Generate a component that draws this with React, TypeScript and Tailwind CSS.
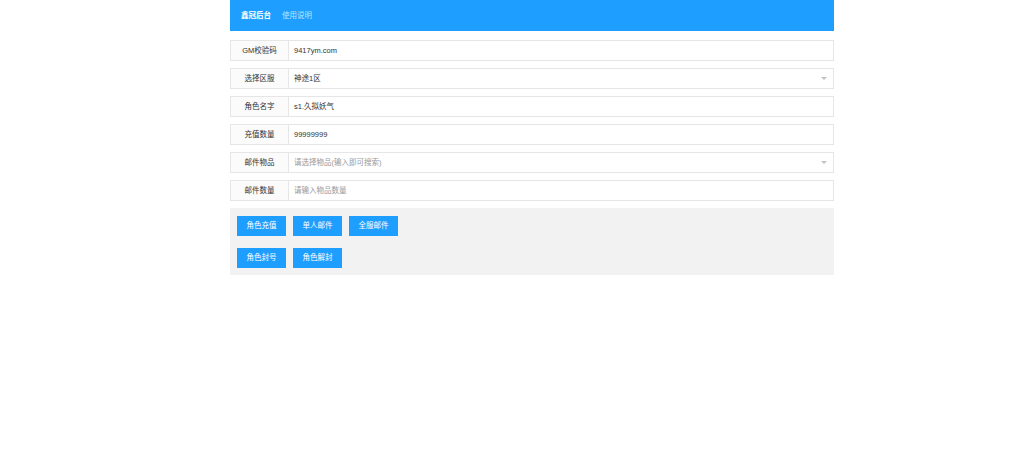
import React from "react";

const font = "font-['Liberation_Sans','Noto_Sans_CJK_SC',sans-serif]";

function Row({ label, value, placeholder, select }: { label: string; value?: string; placeholder?: string; select?: boolean }) {
  return (
    <div className="flex h-[21px] border border-[#e6e6e6] bg-white">
      <div className="w-[58px] shrink-0 flex items-center justify-center bg-[#fbfbfb] border-r border-[#e6e6e6] text-[7.5px] text-[#333]">
        {label}
      </div>
      <div className="flex-1 flex items-center pl-[5px] pr-[8px] relative">
        {value ? (
          <span className="text-[7.5px] text-[#333]">{value}</span>
        ) : (
          <span className="text-[7.5px] text-[#999]">{placeholder}</span>
        )}
        {select && (
          <span className="absolute right-[6px] top-[8px] w-0 h-0 border-x-[3.5px] border-x-transparent border-t-[3.5px] border-t-[#c2c2c2]" />
        )}
      </div>
    </div>
  );
}

function Btn({ children }: { children: React.ReactNode }) {
  return (
    <div className="h-[20px] w-[49px] flex items-center justify-center bg-[#1e9fff] text-white text-[7.5px]">
      {children}
    </div>
  );
}

export default function App() {
  return (
    <div className={`w-[1024px] h-[460px] bg-white ${font}`}>
      <div className="ml-[230px] w-[604px]">
        <div className="h-[31px] bg-[#1e9fff] flex items-center pl-[11px] gap-[11px]">
          <span className="text-[7.5px] font-bold text-white">鑫冠后台</span>
          <span className="text-[7.5px] text-white/70">使用说明</span>
        </div>
        <div className="flex flex-col gap-[7px] mt-[9px]">
          <Row label="GM校验码" value="9417ym.com" />
          <Row label="选择区服" value="神途1区" select />
          <Row label="角色名字" value="s1.久拟妖气" />
          <Row label="充值数量" value="99999999" />
          <Row label="邮件物品" placeholder="请选择物品(输入即可搜索)" select />
          <Row label="邮件数量" placeholder="请输入物品数量" />
        </div>
        <div className="mt-[7px] bg-[#f2f2f2] pt-[8px] pb-[7px] pl-[7px] flex flex-col gap-[12px]">
          <div className="flex gap-[7px]">
            <Btn>角色充值</Btn>
            <Btn>单人邮件</Btn>
            <Btn>全服邮件</Btn>
          </div>
          <div className="flex gap-[7px]">
            <Btn>角色封号</Btn>
            <Btn>角色解封</Btn>
          </div>
        </div>
      </div>
    </div>
  );
}
